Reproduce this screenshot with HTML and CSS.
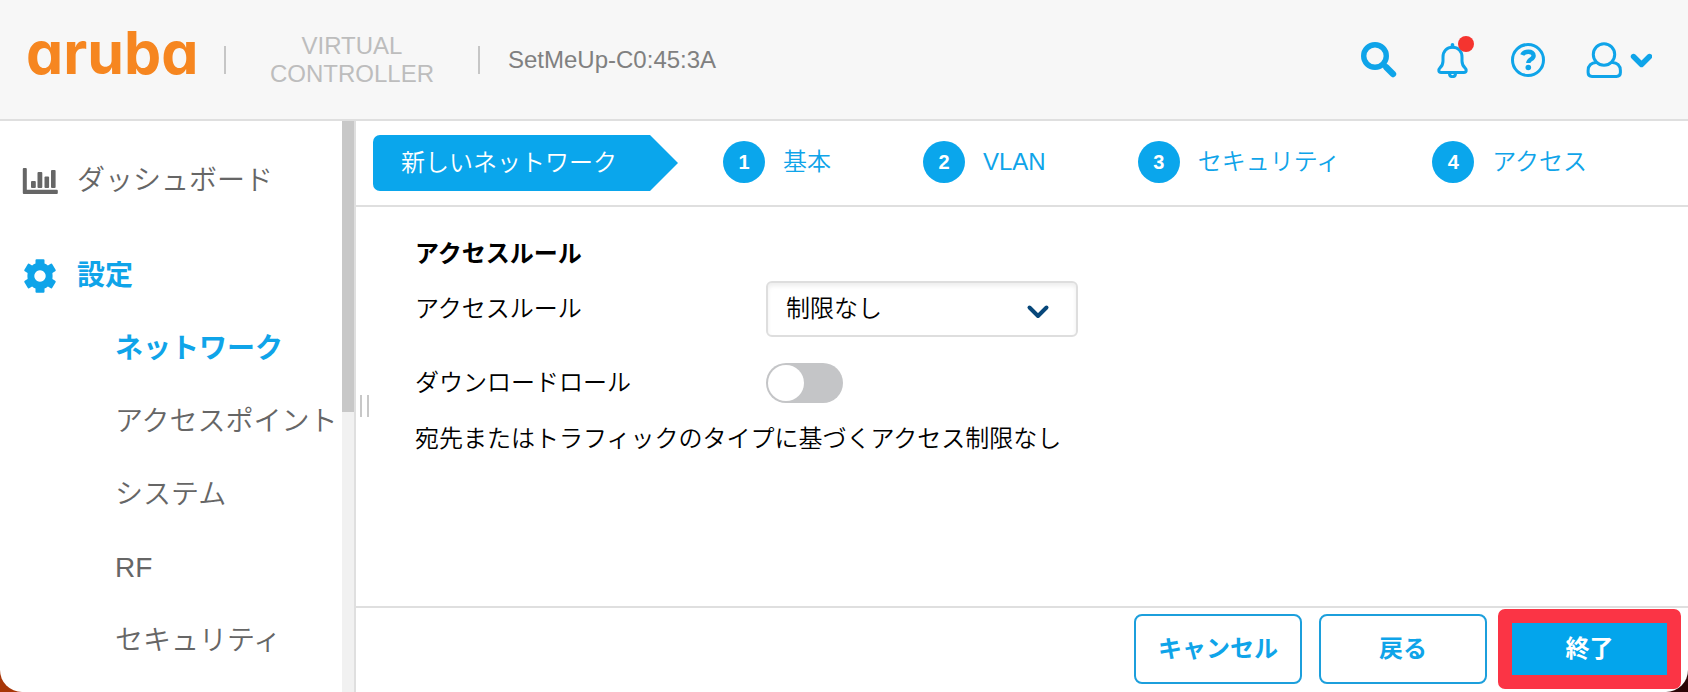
FILE: index.html
```html
<!DOCTYPE html>
<html lang="ja">
<head>
   <meta charset="utf-8">
   <title>Aruba Virtual Controller</title>
   <link rel="stylesheet" href="styles.css">
</head>
<body>
<div class="app">

   <header class="topbar">
      <a class="logo" href="#">aruba</a>
      <span class="divider"></span>
      <span class="product">VIRTUAL<br>CONTROLLER</span>
      <span class="divider"></span>
      <span class="device">SetMeUp-C0:45:3A</span>

      <div class="tools">
         <button type="button" aria-label="検索">
            <svg width="36" height="36" viewBox="0 0 36 36" fill="none" stroke="currentColor">
               <circle cx="14" cy="14" r="11.3" stroke-width="5.4"/>
               <path d="M22 22l3 3" stroke-width="4"/>
               <path d="M25.500 25.500l6.500 6.500" stroke-width="6.400" stroke-linecap="round"/>
            </svg>
         </button>
         <button type="button" class="bell" aria-label="通知">
            <svg width="36" height="36" viewBox="0 0 36 36" fill="none" stroke="currentColor" stroke-width="3" stroke-linecap="round" stroke-linejoin="round">
               <path d="M16.500 5.200c-5.800 0-9.500 4.300-9.500 9.800v4c0 4-1.200 5.400-3.200 7.200-1.800 1.700-1.200 4.300 1.200 4.300h23c2.400 0 3-2.600 1.200-4.300-2-1.800-3.200-3.200-3.200-7.200v-4c0-5.500-3.700-9.800-9.500-9.800z"/>
               <path d="M16.500 2.800v2" stroke-width="3.600"/>
               <path d="M13.500 31.500c0 4.200 6 4.200 6 0"/>
            </svg>
            <span class="dot"></span>
         </button>
         <button type="button" aria-label="ヘルプ">
            <svg width="36" height="36" viewBox="0 0 36 36" fill="none" stroke="currentColor">
               <circle cx="17" cy="18" r="15.500" stroke-width="3"/>
               <path d="M11.300 13c1-2.400 3.200-3.300 6-3.300 3.200 0 5.300 1.500 5.300 4 0 3.700-5.300 3.400-5.300 7.400" stroke-width="4.400"/>
               <circle cx="17.300" cy="25.500" r="2.800" fill="currentColor" stroke="none"/>
            </svg>
         </button>
         <button type="button" aria-label="ユーザー">
            <svg width="66" height="36" viewBox="0 0 66 36" fill="none" stroke="currentColor" stroke-linecap="round" stroke-linejoin="round">
               <circle cx="18" cy="12.500" r="10.700" stroke-width="3"/>
               <path d="M10 20.400c-4.500 0-7.900 3.200-7.900 8v2.200c0 2.300 1.500 3.900 3.900 3.900h24.500c2.400 0 3.900-1.600 3.900-3.900v-2.200c0-4.800-3.400-8-7.900-8" stroke-width="3"/>
               <path d="M47.500 14.500l8 8 8-8" stroke-width="5.400"/>
            </svg>
         </button>
      </div>
   </header>

   <div class="body">
      <nav class="sidebar">
         <div class="menu">
            <a class="item" href="#">
               <svg width="36" height="36" viewBox="0 0 36 36" fill="currentColor">
                  <path d="M1.800 5h2q1 0 1 1v20.800h30q1 0 1 1v2.200q0 1-1 1H1.800q-1 0-1-1V6q0-1 1-1z"/>
                  <rect x="9" y="18" width="4.800" height="7" rx="1"/>
                  <rect x="15.500" y="9" width="4.800" height="16" rx="1"/>
                  <rect x="22.500" y="13.500" width="4.600" height="11.500" rx="1"/>
                  <rect x="29" y="7" width="4.600" height="18" rx="1"/>
               </svg>
               ダッシュボード
            </a>
            <a class="item current" href="#">
               <svg width="36" height="36" viewBox="0 0 36 36" fill="currentColor" fill-rule="evenodd">
                  <path d="M14.500 1.200h7q1 0 1 1v3.300q1.800.7 3.400 2l2.900-1.700q1-.5 1.500.4l3.300 5.600q.5 1-.4 1.500l-2.800 1.700q.4 3 0 6l2.800 1.700q.9.5.4 1.500l-3.300 5.600q-.5.900-1.500.4l-2.900-1.700q-1.600 1.300-3.400 2v3.300q0 1-1 1h-7q-1 0-1-1v-3.300q-1.800-.7-3.400-2l-2.900 1.700q-1 .5-1.500-.4l-3.300-5.600q-.5-1 .4-1.500l2.800-1.700q-.4-3 0-6l-2.800-1.700q-.9-.5-.4-1.500l3.300-5.600q.5-.9 1.500-.4l2.900 1.700q1.600-1.300 3.400-2V2.200q0-1 1-1zM18 12.300a5.700 5.700 0 1 0 .01 0z"/>
               </svg>
               設定
            </a>
            <ul class="submenu">
               <li><a class="current" href="#">ネットワーク</a></li>
               <li><a href="#">アクセスポイント</a></li>
               <li><a href="#">システム</a></li>
               <li><a href="#">RF</a></li>
               <li><a href="#">セキュリティ</a></li>
            </ul>
         </div>
         <div class="scrollbar"><div class="thumb"></div></div>
      </nav>

      <main class="main">
         <span class="grip"></span>

         <div class="steps">
            <div class="tag">新しいネットワーク</div>
            <ol>
               <li><a href="#"><b>1</b>基本</a></li>
               <li><a href="#"><b>2</b>VLAN</a></li>
               <li><a href="#"><b>3</b>セキュリティ</a></li>
               <li><a href="#"><b>4</b>アクセス</a></li>
            </ol>
         </div>

         <form class="content">
            <h2>アクセスルール</h2>
            <div class="row">
               <label for="rule">アクセスルール</label>
               <div class="select">
                  <select id="rule"><option>制限なし</option></select>
                  <svg width="24" height="16" viewBox="0 0 24 16" fill="none" stroke="currentColor" stroke-width="4" stroke-linecap="round" stroke-linejoin="round">
                     <path d="M3.500 3.500l8.500 8.500 8.500-8.500"/>
                  </svg>
               </div>
            </div>
            <div class="row">
               <label for="download">ダウンロードロール</label>
               <input type="checkbox" class="toggle" id="download">
            </div>
            <p>宛先またはトラフィックのタイプに基づくアクセス制限なし</p>
         </form>

         <footer class="actions">
            <button type="button" class="cancel">キャンセル</button>
            <button type="button" class="back">戻る</button>
            <button type="button" class="finish">終了</button>
         </footer>
      </main>
   </div>

</div>
</body>
</html>
```
FILE: styles.css
```css
* { box-sizing: border-box; }

body {
   margin: 0;
   background: linear-gradient(to right, #a83607, #2a0506);
   font-family: "Liberation Sans", "Noto Sans CJK JP", sans-serif;
   font-size: 24px;
   font-weight: 350;
   line-height: 36px;
   color: #000;
}
a { color: inherit; text-decoration: none; }
button, select { font: inherit; }
svg { display: block; flex: none; }

.app {
   display: flex;
   flex-direction: column;
   height: 100vh;
   overflow: hidden;
   background: #fff;
   border-radius: 0 0 22px 22px;
}

/* top bar */
.topbar {
   display: flex;
   align-items: center;
   flex: none;
   height: 121px;
   padding: 0 36px 0 26px;
   background: #f7f7f7;
   border-bottom: 2px solid #dfdfdf;
}
.logo {
   width: 170px;
   margin-right: 28px;
   padding-bottom: 14px;
   font-family: Inter, sans-serif;
   font-size: 59px;
   font-weight: 700;
   font-feature-settings: "cv11";
   line-height: 60px;
   color: #f68620;
}
.divider { width: 2px; height: 28px; background: #c6c6c6; }
.product {
   width: 252px;
   line-height: 28px;
   text-align: center;
   color: #bdbdbd;
}
.device { margin-left: 28px; color: #808080; }
.tools { display: flex; gap: 39px; margin-left: auto; color: #0fa4e9; }
.tools button {
   position: relative;
   padding: 0;
   border: 0;
   background: none;
   color: inherit;
}
.dot {
   position: absolute;
   top: -6px;
   right: -2px;
   width: 16px;
   height: 16px;
   border-radius: 50%;
   background: #f5342f;
}

/* side menu */
.body { display: flex; flex: 1; min-height: 0; }
.sidebar {
   display: flex;
   flex: none;
   width: 356px;
   border-right: 2px solid #dfdfdf;
   color: #666;
   font-size: 28px;
   white-space: nowrap;
}
.menu { flex: 1; min-width: 0; padding: 12px 0 0 22px; }
.item {
   display: flex;
   align-items: center;
   gap: 19px;
   height: 95px;
}
.submenu { margin: -11px 0 0; padding: 0 0 0 93px; list-style: none; }
.submenu a { display: block; line-height: 73px; }
.sidebar .current { color: #0fa4e9; font-weight: 700; }
.scrollbar { width: 12px; background: #f1f1f1; }
.thumb { height: 51%; background: #c8c8c8; }

/* wizard */
.main {
   position: relative;
   display: flex;
   flex-direction: column;
   flex: 1;
   min-width: 0;
}
.grip {
   position: absolute;
   top: 48%;
   left: 4px;
   width: 9px;
   height: 22px;
   border: solid #c8c8c8;
   border-width: 0 2px;
}
.steps {
   display: flex;
   align-items: center;
   flex: none;
   height: 86px;
   padding: 0 17px;
   border-bottom: 2px solid #dfdfdf;
   white-space: nowrap;
}
.tag {
   width: 305px;
   padding-left: 28px;
   border-radius: 7px 0 0 7px;
   background: #0aa6ec;
   clip-path: polygon(0 0, 277px 0, 100% 50%, 277px 100%, 0 100%);
   color: #fff;
   line-height: 56px;
}
.steps ol {
   display: flex;
   gap: 92px;
   margin: 0 0 3px 45px;
   padding: 0;
   list-style: none;
}
.steps a { display: flex; align-items: center; gap: 18px; color: #0fa4e9; }
.steps b {
   width: 42px;
   border-radius: 50%;
   background: #0aa6ec;
   color: #fff;
   font-size: 20px;
   font-weight: 700;
   line-height: 42px;
   text-align: center;
}

.content { flex: 1; padding: 29px 59px 0; }
.content h2 { margin: 0 0 9px; font-size: 24px; }
.content p { margin: 0; }
.row {
   display: grid;
   grid-template-columns: 351px 1fr;
   align-items: center;
}
.row + .row { margin: 26px 0 18px; }
.select { position: relative; width: 312px; }
.select select {
   display: block;
   width: 100%;
   height: 56px;
   padding: 0 18px;
   border: 2px solid #dedede;
   border-radius: 6px;
   background: #fff;
   box-shadow: inset 0 3px 4px #eee;
   color: #000;
   appearance: none;
}
.select svg {
   position: absolute;
   top: 23px;
   right: 28px;
   color: #07477a;
   pointer-events: none;
}
.toggle {
   width: 77px;
   height: 40px;
   margin: 0;
   padding: 2px;
   border-radius: 20px;
   background: #c4c5c7;
   appearance: none;
}
.toggle::before {
   content: "";
   display: block;
   width: 36px;
   height: 36px;
   border-radius: 50%;
   background: #fff;
}
.toggle:checked { background: #0aa6ec; }
.toggle:checked::before { margin-left: auto; }

.actions {
   display: flex;
   align-items: center;
   justify-content: flex-end;
   flex: none;
   padding: 1px 7px 3px;
   border-top: 2px solid #dfdfdf;
}
.actions button {
   width: 168px;
   height: 70px;
   padding: 0;
   border: 2px solid #1c9fdc;
   border-radius: 8px;
   background: #fff;
   color: #0fa4e9;
   font-weight: 700;
}
.actions .cancel { margin-right: 17px; }
.actions .back { margin-right: 11px; }
.actions .finish {
   width: 183px;
   height: 80px;
   border: 14px solid #fb3445;
   border-radius: 7px;
   background: #03a5ec;
   color: #fff;
}
```
